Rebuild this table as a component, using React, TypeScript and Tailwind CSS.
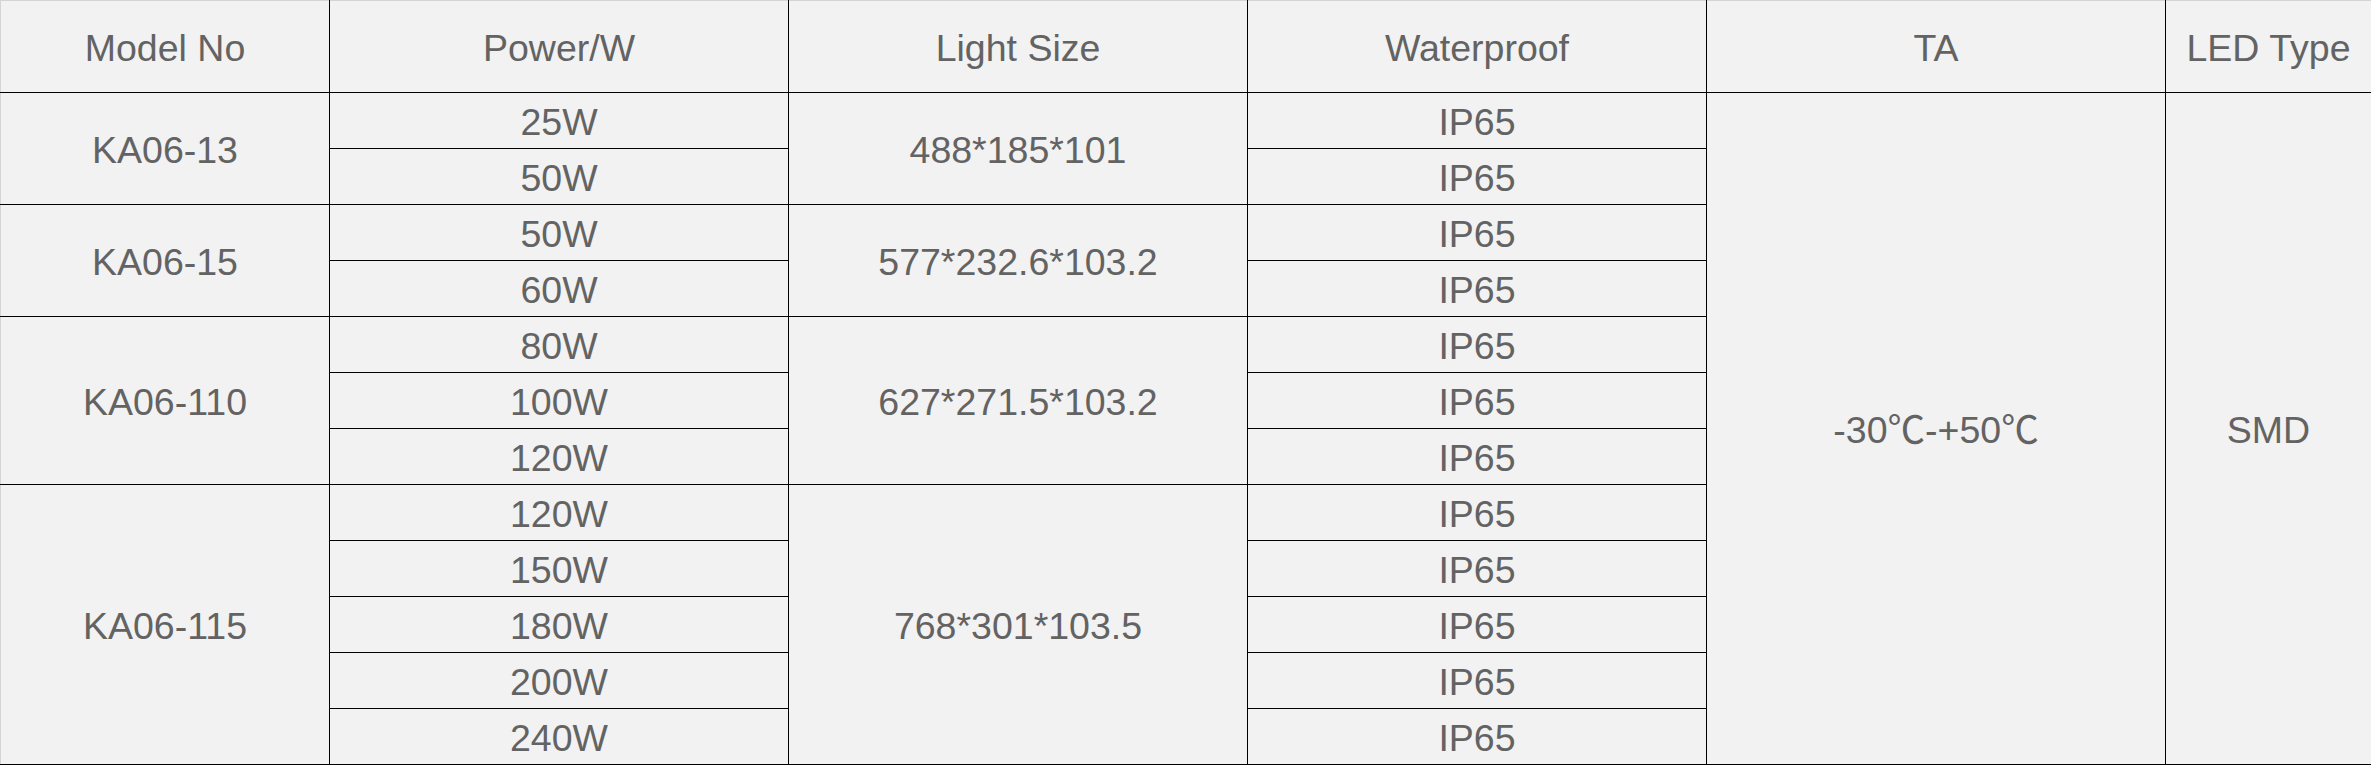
const groups = [
  { model: "KA06-13", size: "488*185*101", powers: ["25W", "50W"] },
  { model: "KA06-15", size: "577*232.6*103.2", powers: ["50W", "60W"] },
  { model: "KA06-110", size: "627*271.5*103.2", powers: ["80W", "100W", "120W"] },
  { model: "KA06-115", size: "768*301*103.5", powers: ["120W", "150W", "180W", "200W", "240W"] },
];

const totalRows = groups.reduce((n, g) => n + g.powers.length, 0);

const cell = "border border-black text-center align-middle px-0 pt-[4px] pb-0 font-normal";

export default function App() {
  return (
    <div className="w-[2371px] h-[765px] bg-[#f2f2f2] overflow-hidden">
      <table className="border-collapse table-fixed w-[2371px] bg-[#f2f2f2] text-[#636363] text-[37.5px] leading-none font-['Liberation_Sans','Noto_Sans_CJK_SC',sans-serif]">
        <colgroup>
          <col className="w-[329px]" />
          <col className="w-[459px]" />
          <col className="w-[459px]" />
          <col className="w-[459px]" />
          <col className="w-[459px]" />
          <col className="w-[206px]" />
        </colgroup>
        <thead>
          <tr className="h-[92px]">
            <th className={`${cell} border-t-[#d4d4d4] border-l-[#d4d4d4]`}>Model No</th>
            <th className={`${cell} border-t-[#d4d4d4]`}>Power/W</th>
            <th className={`${cell} border-t-[#d4d4d4]`}>Light Size</th>
            <th className={`${cell} border-t-[#d4d4d4]`}>Waterproof</th>
            <th className={`${cell} border-t-[#d4d4d4]`}>TA</th>
            <th className={`${cell} border-t-[#d4d4d4]`}>LED Type</th>
          </tr>
        </thead>
        <tbody>
          {groups.map((g, gi) =>
            g.powers.map((p, pi) => (
              <tr key={`${gi}-${pi}`} className="h-[56px]">
                {pi === 0 && (
                  <td rowSpan={g.powers.length} className={`${cell} border-l-[#d4d4d4]`}>
                    {g.model}
                  </td>
                )}
                <td className={cell}>{p}</td>
                {pi === 0 && (
                  <td rowSpan={g.powers.length} className={cell}>
                    {g.size}
                  </td>
                )}
                <td className={cell}>IP65</td>
                {gi === 0 && pi === 0 && (
                  <>
                    <td rowSpan={totalRows} className={cell}>
                      -30℃-+50℃
                    </td>
                    <td rowSpan={totalRows} className={cell}>
                      SMD
                    </td>
                  </>
                )}
              </tr>
            ))
          )}
        </tbody>
      </table>
    </div>
  );
}
